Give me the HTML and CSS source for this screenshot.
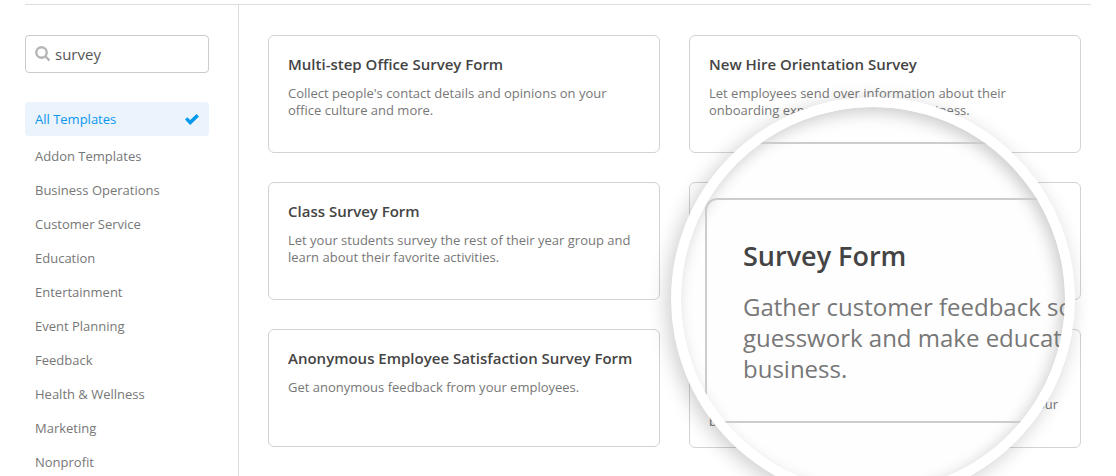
FILE: index.html
```html
<!DOCTYPE html>
<html lang="en">
<head>
  <meta charset="UTF-8">
  <title>Form Templates</title>
  <link rel="stylesheet" href="styles.css">
</head>
<body>
  <div class="templates">
    <!-- Search and categories -->
    <aside class="sidebar">
      <div class="search">
        <svg class="search-icon" viewBox="0 0 16 16" aria-hidden="true">
          <circle cx="6.5" cy="6.5" r="5.2"/>
          <path d="M10.5 10.5L14.5 14.5"/>
        </svg>
        <input type="text" class="search-input" aria-label="Search templates" value="survey">
      </div>

      <ul class="categories">
        <li>
          <a href="#" class="category active">All Templates
            <svg class="check-icon" viewBox="0 0 14 11" aria-hidden="true">
              <path d="M0 5.6L2.3 3.3L5.2 6.1L11.5 0L14 2.4L5.2 11Z"/>
            </svg>
          </a>
        </li>
        <li><a href="#" class="category">Addon Templates</a></li>
        <li><a href="#" class="category">Business Operations</a></li>
        <li><a href="#" class="category">Customer Service</a></li>
        <li><a href="#" class="category">Education</a></li>
        <li><a href="#" class="category">Entertainment</a></li>
        <li><a href="#" class="category">Event Planning</a></li>
        <li><a href="#" class="category">Feedback</a></li>
        <li><a href="#" class="category">Health &amp; Wellness</a></li>
        <li><a href="#" class="category">Marketing</a></li>
        <li><a href="#" class="category">Nonprofit</a></li>
      </ul>
    </aside>

    <!-- Template cards -->
    <main class="content">
      <div class="card-grid">
        <article class="card">
          <h3>Multi-step Office Survey Form</h3>
          <p>Collect people's contact details and opinions on your office culture and more.</p>
        </article>
        <article class="card">
          <h3>New Hire Orientation Survey</h3>
          <p>Let employees send over information about their onboarding experience with your business.</p>
        </article>
        <article class="card">
          <h3>Class Survey Form</h3>
          <p>Let your students survey the rest of their year group and learn about their favorite activities.</p>
        </article>
        <article class="card"></article>
        <article class="card">
          <h3>Anonymous Employee Satisfaction Survey Form</h3>
          <p>Get anonymous feedback from your employees.</p>
        </article>
        <article class="card">
          <h3>Survey Form</h3>
          <p>Gather customer feedback so you can take out the guesswork and make educated decisions concerning your business.</p>
        </article>

        <!-- Magnifier over the Survey Form card -->
        <div class="lens">
          <div class="lens-edge"></div>
          <div class="lens-card">
            <h3>Survey Form</h3>
            <p>Gather customer feedback so you can take out the guesswork and make educated decisions concerning your business.</p>
          </div>
        </div>
      </div>
    </main>
  </div>
</body>
</html>
```
FILE: styles.css
```css
* {
  box-sizing: border-box;
}
body {
  margin: 0;
  height: 100vh;
  overflow: hidden;
  background-color: #fff;
  color: #777;
  font-family: "Open Sans", "Noto Sans", sans-serif;
  font-size: 13px;
}
h3, p, ul {
  margin: 0;
  padding: 0;
}
.templates {
  display: flex;
  min-height: 100vh;
  margin: 4px 25px 0;
  border-top: 1px solid #ddd;
}

/* sidebar */
.sidebar {
  flex: none;
  width: 214px;
  padding: 30px 29px 0 0;
  border-right: 1px solid #ddd;
}
.search {
  display: flex;
  align-items: center;
  height: 38px;
  margin-bottom: 29px;
  padding: 0 9px;
  border: 1px solid #ccc;
  border-radius: 4px;
}
.search-icon {
  flex: none;
  width: 16px;
  height: 16px;
  fill: none;
  stroke: #b5b5b5;
  stroke-width: 2.4;
}
.search-input {
  width: 100%;
  padding: 0 0 0 4px;
  border: none;
  outline: none;
  background: none;
  color: #555;
  font-family: inherit;
  font-size: 15px;
}
.categories {
  list-style: none;
}
.category {
  display: flex;
  align-items: center;
  justify-content: space-between;
  height: 34px;
  padding: 0 10px;
  color: #777;
  text-decoration: none;
}
.category.active {
  margin-bottom: 3px;
  border-radius: 4px;
  background-color: #ebf3fc;
  color: #0c97ee;
}
.check-icon {
  width: 14px;
  height: 11px;
  fill: #0399ed;
}

/* cards */
.content {
  flex: 1;
  padding: 30px 10px 0 29px;
}
.card-grid {
  position: relative;
  display: grid;
  grid-template-columns: 1fr 1fr;
  align-items: start;
  gap: 29px;
}
.card {
  min-height: 118px;
  padding: 17px 17px 17px 19px;
  border: 1px solid #d3d3d3;
  border-radius: 6px;
}
.card h3 {
  margin-bottom: 10px;
  color: #444;
  font-size: 15px;
  font-weight: 600;
  line-height: 22px;
}
.card p {
  line-height: 17px;
}

/* magnifier */
.lens {
  position: absolute;
  top: 62px;
  right: 6px;
  width: 404px;
  height: 404px;
  overflow: hidden;
  border: 10px solid #fff;
  border-radius: 50%;
  background-color: #fefefe;
  box-shadow: -4px 4px 20px rgba(0, 0, 0, 0.2), inset -4px 5px 16px rgba(0, 0, 0, 0.2);
}
.lens-edge {
  height: 37px;
  margin-bottom: 54px;
  border-bottom: 2px solid #ccc;
}
.lens-card {
  width: 733px;
  height: 225px;
  margin-left: 24px;
  padding: 36px;
  border: 2px solid #ccc;
  border-radius: 12px;
}
.lens-card h3 {
  margin-bottom: 16px;
  color: #444;
  font-size: 27px;
  font-weight: 600;
  line-height: 39px;
}
.lens-card p {
  font-size: 24px;
  line-height: 31px;
}
```
